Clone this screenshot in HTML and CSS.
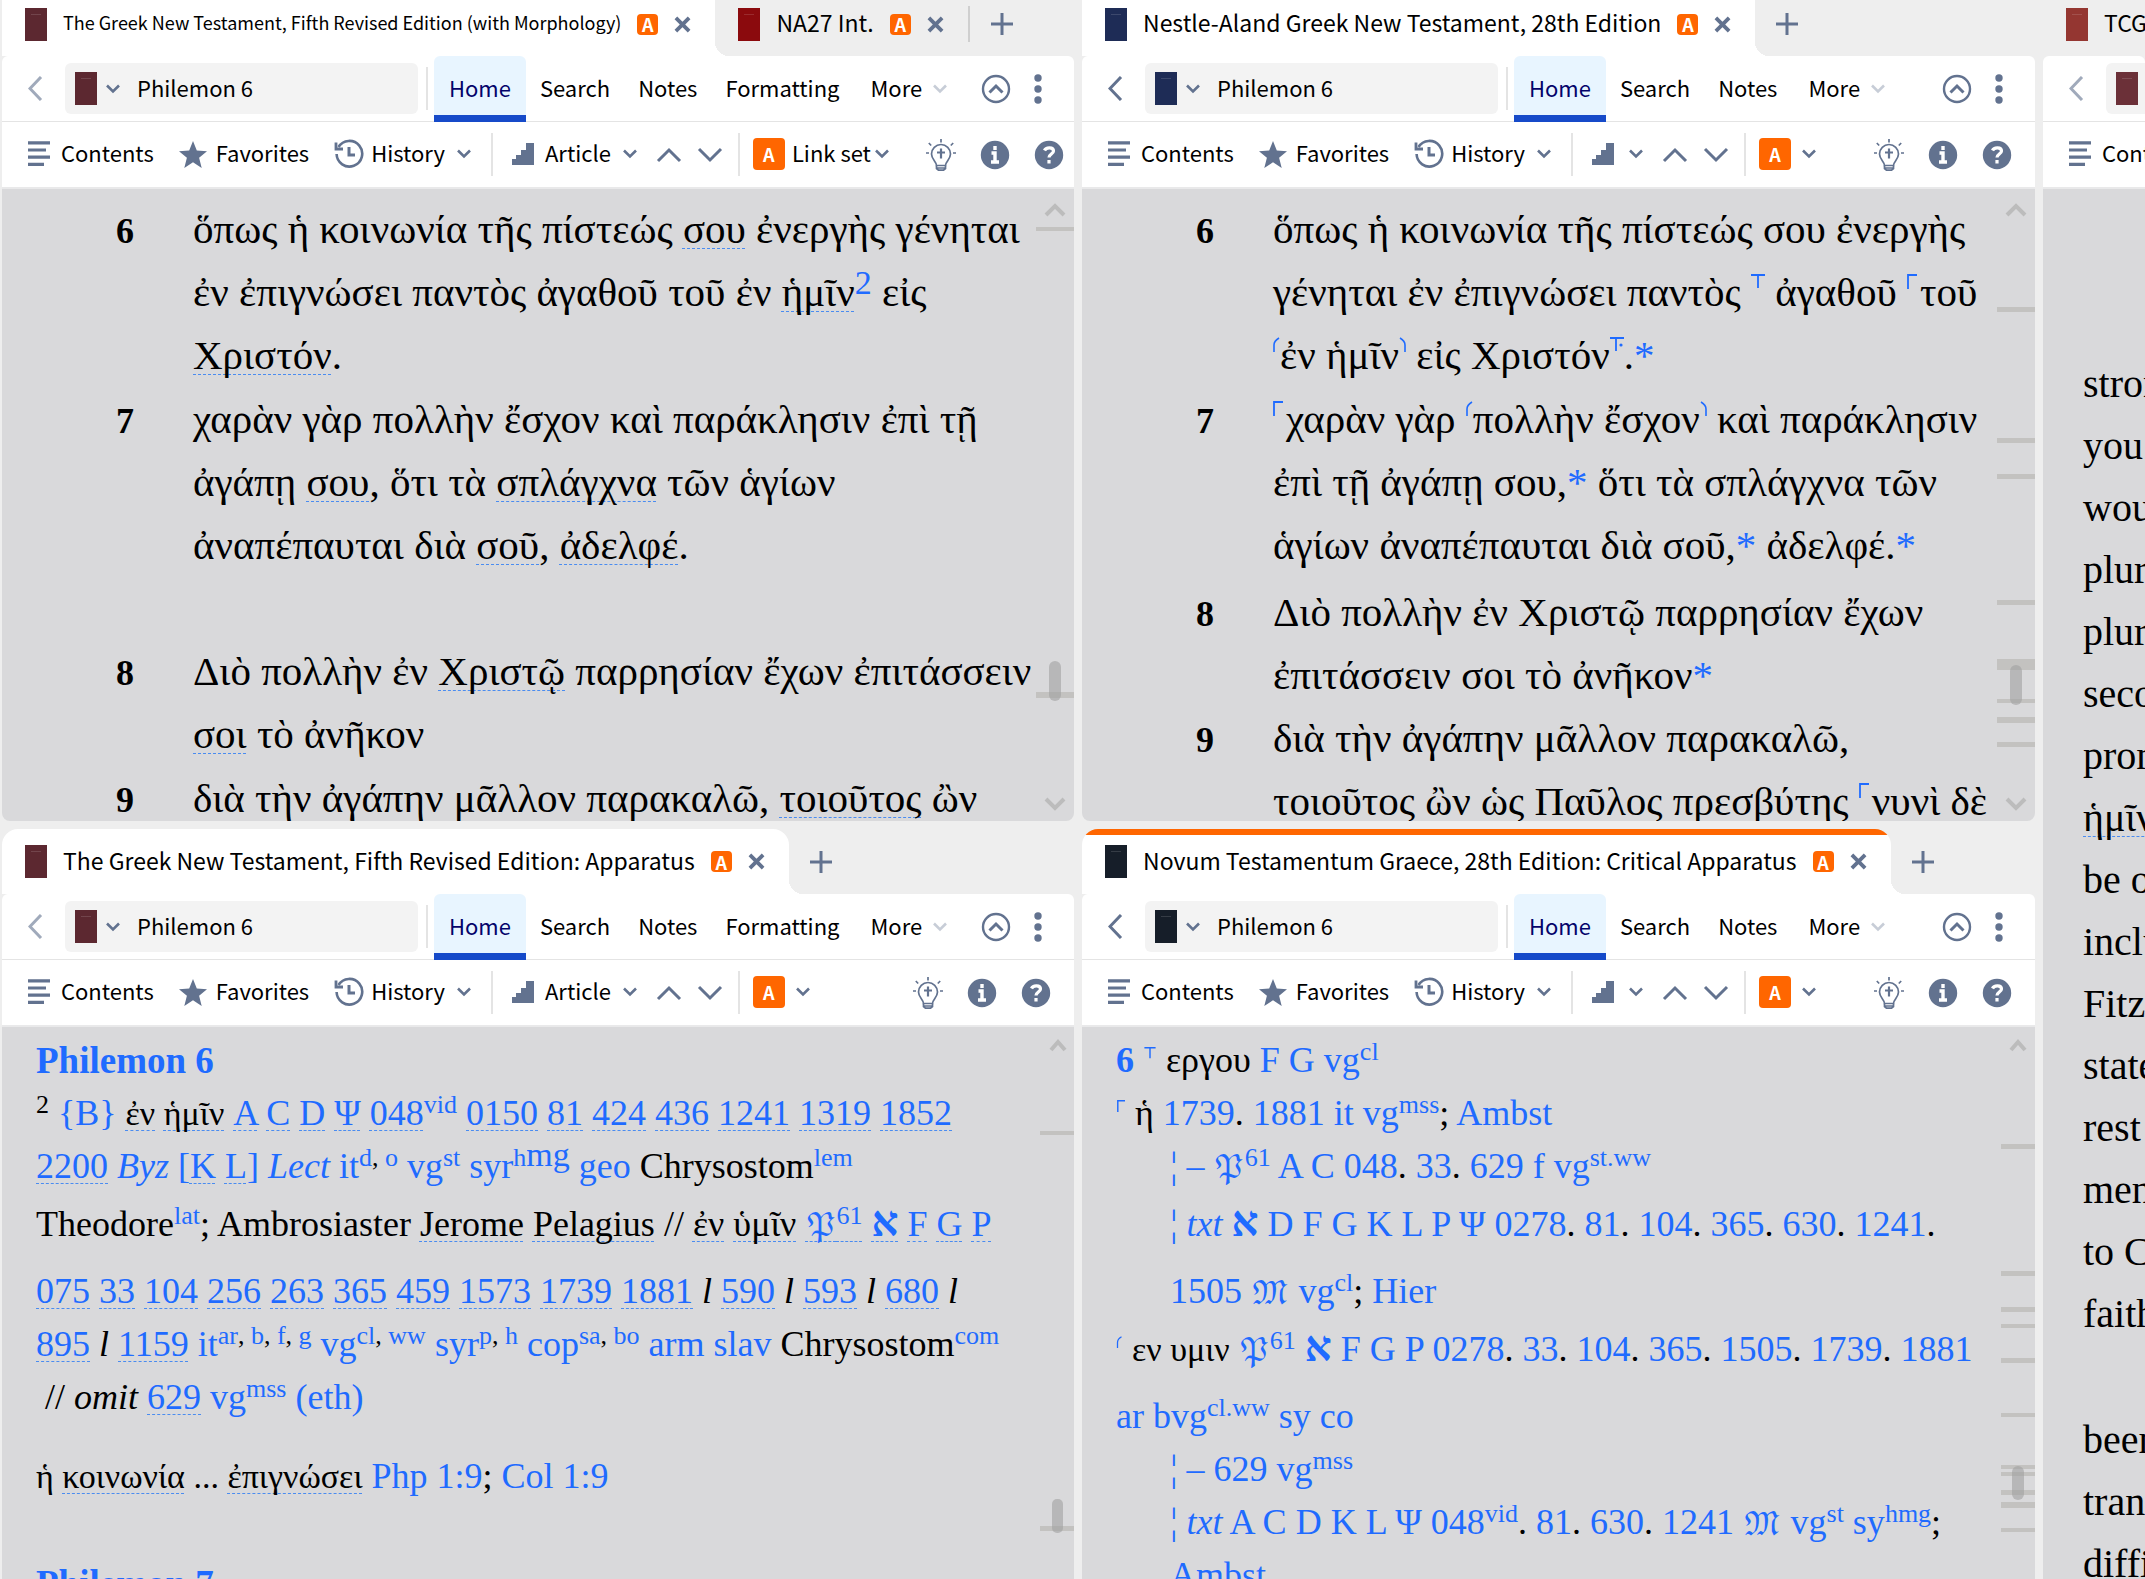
FILE: index.html
```html
<!DOCTYPE html>
<html lang="en">
<head>
  <meta charset="UTF-8" />
  <meta name="viewport" content="width=device-width, initial-scale=1.0"/>
  <title>Philemon 6</title>
  <link rel="stylesheet" href="styles.css">
</head>
<body>
  <!-- Shared icons -->
  <svg class="sprite" aria-hidden="true">
    <symbol id="close" viewBox="0 0 18 18"><path d="M2 2l14 14M16 2L2 16" fill="none" stroke="currentColor" stroke-width="4"/></symbol>
    <symbol id="plus" viewBox="0 0 22 22"><path d="M11 0v22M0 11h22" stroke="currentColor" stroke-width="3"/></symbol>
    <symbol id="back" viewBox="0 0 15 25"><path d="M13 1L2 12.500l11 11.500" fill="none" stroke="currentColor" stroke-width="3"/></symbol>
    <symbol id="down" viewBox="0 0 14 10"><path d="M1 1.500l6 6 6-6" fill="none" stroke="currentColor" stroke-width="2.600"/></symbol>
    <symbol id="next" viewBox="0 0 26 16"><path d="M2 2l11 11L24 2" fill="none" stroke="currentColor" stroke-width="3"/></symbol>
    <symbol id="prev" viewBox="0 0 26 16"><path d="M2 14L13 3l11 11" fill="none" stroke="currentColor" stroke-width="3"/></symbol>
    <symbol id="collapse" viewBox="0 0 30 30"><circle cx="15" cy="15" r="13" fill="none" stroke="currentColor" stroke-width="2.400"/><path d="M8.500 18.500l6.500-6.500 6.500 6.500" fill="none" stroke="currentColor" stroke-width="3"/></symbol>
    <symbol id="dots" viewBox="0 0 8 30"><circle cx="4" cy="4" r="3.700" fill="currentColor"/><circle cx="4" cy="15" r="3.700" fill="currentColor"/><circle cx="4" cy="26" r="3.700" fill="currentColor"/></symbol>
    <symbol id="contents" viewBox="0 0 22 26"><path d="M0 1.800h22M0 9h18M0 16.200h22M0 23.400h16" stroke="currentColor" stroke-width="3.200"/></symbol>
    <symbol id="star" viewBox="0 0 28 27"><path d="M14 0l3.800 9.600L28 10.300l-7.900 6.500L22.700 27 14 21.300 5.300 27l2.600-10.200L0 10.300l10.200-.7z" fill="currentColor"/></symbol>
    <symbol id="history" viewBox="0 0 30 30"><path d="M4.500 8A12.800 12.800 0 1 1 2.600 15" fill="none" stroke="currentColor" stroke-width="2.600"/><path d="M2 3.500V10h7" fill="none" stroke="currentColor" stroke-width="2.800"/><path d="M15 8v8h6" fill="none" stroke="currentColor" stroke-width="3"/></symbol>
    <symbol id="steps" viewBox="0 0 22 22"><path d="M0 22v-6h4v-4h5V7h5V0h8v22z" fill="currentColor"/></symbol>
    <symbol id="bulb" viewBox="0 0 30 32"><g fill="none" stroke="currentColor" stroke-width="1.700"><path d="M10.500 26.500c0-4-5-6-5-11.500a9.500 9.500 0 0 1 19 0c0 5.500-5 7.500-5 11.500z"/><path d="M10.500 26.500v3l2 1.700h5l2-1.700v-3M10.500 29h9M15 0v3.500M0 14h3M27 14h3M2.800 4l2.400 2.500M27.200 4l-2.400 2.500"/><path d="M15 9.500v10M11 13.500h8" stroke-width="2.200"/></g></symbol>
    <symbol id="info" viewBox="0 0 30 30"><circle cx="15" cy="15" r="14.200" fill="currentColor"/><path d="M15 6v4M11.500 13H15v9M11 22h8" fill="none" stroke="#fff" stroke-width="3.400"/></symbol>
    <symbol id="help" viewBox="0 0 30 30"><circle cx="15" cy="15" r="14.200" fill="currentColor"/><path d="M10.500 10.500C12 7 19.500 7 19.500 11c0 3-4.500 3.200-4.500 6.500M15 20v3.500" fill="none" stroke="#fff" stroke-width="3.200"/></symbol>
    <!-- text-critical signs -->
    <symbol id="insert" viewBox="0 0 14 15"><path d="M0 1h14M7 1v13" fill="none" stroke="currentColor" stroke-width="1.800"/></symbol>
    <symbol id="insert2" viewBox="0 0 14 15"><path d="M0 1h14M6 1v13" fill="none" stroke="currentColor" stroke-width="1.800"/><circle cx="11" cy="8" r="1.600" fill="currentColor"/></symbol>
    <symbol id="replace" viewBox="0 0 10 15"><path d="M1 15V1h9" fill="none" stroke="currentColor" stroke-width="1.800"/></symbol>
    <symbol id="open" viewBox="0 0 7 15"><path d="M1 15V8q0-4 5-7" fill="none" stroke="currentColor" stroke-width="1.600"/></symbol>
    <symbol id="shut" viewBox="0 0 7 15"><path d="M6 15V8q0-4-5-7" fill="none" stroke="currentColor" stroke-width="1.600"/></symbol>
  </svg>

  <div class="desk">
    <div class="column column-left">

      <section class="pane upper">
        <div class="tabs">
          <div class="tab active long">
            <span class="book maroon"></span>
            <button class="title">The Greek New Testament, Fifth Revised Edition (with Morphology)</button>
            <span class="badge">A</span>
            <button class="close" aria-label="Close"><svg><use href="#close"/></svg></button>
          </div>
          <div class="tab">
            <span class="book red"></span>
            <button class="title">NA27 Int.</button>
            <span class="badge">A</span>
            <button class="close" aria-label="Close"><svg><use href="#close"/></svg></button>
          </div>
          <span class="tab-line"></span>
          <button class="add" aria-label="New tab"><svg><use href="#plus"/></svg></button>
        </div>
        <nav class="nav">
          <button class="back off" aria-label="Back"><svg><use href="#back"/></svg></button>
          <div class="field">
            <span class="book maroon"></span>
            <button class="drop" aria-label="Choose resource"><svg><use href="#down"/></svg></button>
            <input type="text" aria-label="Reference" value="Philemon 6">
          </div>
          <span class="sep"></span>
          <button class="menu on">Home</button>
          <button class="menu">Search</button>
          <button class="menu">Notes</button>
          <button class="menu">Formatting</button>
          <button class="menu more">More <svg class="ic-down"><use href="#down"/></svg></button>
          <button class="collapse" aria-label="Collapse"><svg><use href="#collapse"/></svg></button>
          <button class="dots" aria-label="Panel menu"><svg><use href="#dots"/></svg></button>
        </nav>
        <div class="tools">
          <button class="tool contents"><svg><use href="#contents"/></svg>Contents</button>
          <button class="tool star"><svg><use href="#star"/></svg>Favorites</button>
          <button class="tool history"><svg><use href="#history"/></svg>History <svg class="ic-down"><use href="#down"/></svg></button>
          <span class="sep"></span>
          <button class="tool steps"><svg><use href="#steps"/></svg>Article <svg class="ic-down"><use href="#down"/></svg></button>
          <button class="step" aria-label="Previous"><svg><use href="#prev"/></svg></button>
          <button class="step" aria-label="Next"><svg><use href="#next"/></svg></button>
          <span class="sep"></span>
          <button class="tool link"><span class="set">A</span>Link set <svg class="ic-down"><use href="#down"/></svg></button>
          <div class="help tight">
            <button aria-label="Tips"><svg class="ic-bulb"><use href="#bulb"/></svg></button>
            <button aria-label="Information"><svg><use href="#info"/></svg></button>
            <button aria-label="Help"><svg><use href="#help"/></svg></button>
          </div>
        </div>
        <div class="view verses" lang="el">
          <div class="verse">
            <b>6</b>
            <p>ὅπως ἡ κοινωνία τῆς πίστεώς <u>σου</u> ἐνεργὴς γένηται<br>ἐν ἐπιγνώσει παντὸς ἀγαθοῦ τοῦ ἐν <u>ἡμῖν</u><a href="#"><sup>2</sup></a> εἰς<br><u>Χριστόν</u>.</p>
          </div>
          <div class="verse">
            <b>7</b>
            <p>χαρὰν γὰρ πολλὴν ἔσχον καὶ παράκλησιν ἐπὶ τῇ<br>ἀγάπῃ <u>σου</u>, ὅτι τὰ <u>σπλάγχνα</u> τῶν ἁγίων<br>ἀναπέπαυται διὰ <u>σοῦ</u>, <u>ἀδελφέ</u>.</p>
          </div>
          <div class="verse section">
            <b>8</b>
            <p>Διὸ πολλὴν ἐν <u>Χριστῷ</u> παρρησίαν ἔχων ἐπιτάσσειν<br><u>σοι</u> τὸ ἀνῆκον</p>
          </div>
          <div class="verse">
            <b>9</b>
            <p>διὰ τὴν ἀγάπην μᾶλλον παρακαλῶ, <u>τοιοῦτος</u> ὢν</p>
          </div>
          <svg class="scroll" width="38" height="633">
            <path class="arrow" d="M10 26l9-9 9 9M10 610l9 9 9-9"/>
            <path class="marks" d="M0 38h38v4H0zM0 503h38v6H0z"/>
            <rect class="thumb" x="13" y="472" width="12" height="40" rx="6"/>
          </svg>
        </div>
      </section>

      <section class="pane lower">
        <div class="tabs">
          <div class="tab active">
            <span class="book maroon"></span>
            <button class="title">The Greek New Testament, Fifth Revised Edition: Apparatus</button>
            <span class="badge">A</span>
            <button class="close" aria-label="Close"><svg><use href="#close"/></svg></button>
          </div>
          <button class="add" aria-label="New tab"><svg><use href="#plus"/></svg></button>
        </div>
        <nav class="nav">
          <button class="back off" aria-label="Back"><svg><use href="#back"/></svg></button>
          <div class="field">
            <span class="book maroon"></span>
            <button class="drop" aria-label="Choose resource"><svg><use href="#down"/></svg></button>
            <input type="text" aria-label="Reference" value="Philemon 6">
          </div>
          <span class="sep"></span>
          <button class="menu on">Home</button>
          <button class="menu">Search</button>
          <button class="menu">Notes</button>
          <button class="menu">Formatting</button>
          <button class="menu more">More <svg class="ic-down"><use href="#down"/></svg></button>
          <button class="collapse" aria-label="Collapse"><svg><use href="#collapse"/></svg></button>
          <button class="dots" aria-label="Panel menu"><svg><use href="#dots"/></svg></button>
        </nav>
        <div class="tools">
          <button class="tool contents"><svg><use href="#contents"/></svg>Contents</button>
          <button class="tool star"><svg><use href="#star"/></svg>Favorites</button>
          <button class="tool history"><svg><use href="#history"/></svg>History <svg class="ic-down"><use href="#down"/></svg></button>
          <span class="sep"></span>
          <button class="tool steps"><svg><use href="#steps"/></svg>Article <svg class="ic-down"><use href="#down"/></svg></button>
          <button class="step" aria-label="Previous"><svg><use href="#prev"/></svg></button>
          <button class="step" aria-label="Next"><svg><use href="#next"/></svg></button>
          <span class="sep"></span>
          <button class="tool link" aria-label="Link set"><span class="set">A</span><svg class="ic-down"><use href="#down"/></svg></button>
          <div class="help">
            <button aria-label="Tips"><svg class="ic-bulb"><use href="#bulb"/></svg></button>
            <button aria-label="Information"><svg><use href="#info"/></svg></button>
            <button aria-label="Help"><svg><use href="#help"/></svg></button>
          </div>
        </div>
        <div class="view apparatus">
          <h2><a href="#">Philemon 6</a></h2>
          <p><sup>2</sup> <a href="#">{B}</a> <i class="gr"><u>ἐν</u> <u>ἡμῖν</u></i> <a href="#"><u>A</u> <u>C</u> <u>D</u> <u>Ψ</u> <u>048</u><sup>vid</sup> <u>0150</u> <u>81</u> <u>424</u> <u>436</u> <u>1241</u> <u>1319</u> <u>1852</u></a></p>
          <p><a href="#"><u>2200</u> <em>Byz</em> [<u>K</u> <u>L</u>] <em>Lect</em> it<sup>d</sup></a><sup>, </sup><a href="#"><sup>o</sup> vg<sup>st</sup> syr<sup>h</sup><sup class="big">mg</sup> geo</a> Chrysostom<a href="#"><sup>lem</sup></a></p>
          <p class="gap-s">Theodore<a href="#"><sup>lat</sup></a>; Ambrosiaster <u>Jerome</u> <u>Pelagius</u> // <u>ἐν</u> <u>ὑμῖν</u> <a href="#"><u><span class="fraktur">𝔓</span><sup>61</sup></u> <u><span class="alef">&#x5D0;</span></u> <u>F</u> <u>G</u> <u>P</u></a></p>
          <p class="gap-m"><a href="#"><u>075</u> <u>33</u> <u>104</u> <u>256</u> <u>263</u> <u>365</u> <u>459</u> <u>1573</u> <u>1739</u> <u>1881</u></a> <em>l</em> <a href="#"><u>590</u></a> <em>l</em> <a href="#"><u>593</u></a> <em>l</em> <a href="#"><u>680</u></a> <em>l</em></p>
          <p><a href="#"><u>895</u></a> <em>l</em> <a href="#"><u>1159</u> it<sup>ar</sup></a><sup>, </sup><a href="#"><sup>b</sup></a><sup>, </sup><a href="#"><sup>f</sup></a><sup>, </sup><a href="#"><sup>g</sup> vg<sup>cl</sup></a><sup>, </sup><a href="#"><sup>ww</sup> syr<sup>p</sup></a><sup>, </sup><a href="#"><sup>h</sup> cop<sup>sa</sup></a><sup>, </sup><a href="#"><sup>bo</sup> arm slav</a> Chrysostom<a href="#"><sup>com</sup></a></p>
          <p>&nbsp;// <em>omit</em> <a href="#"><u>629</u> vg<sup>mss</sup> (eth)</a></p>
          <p class="gap-l"><i class="gr">ἡ <u>κοινωνία</u> ... <u>ἐπιγνώσει</u></i> <a href="#">Php 1:9</a>; <a href="#">Col 1:9</a></p>
          <h2 class="gap-xl"><a href="#">Philemon 7</a></h2>
          <svg class="scroll" width="34" height="553">
            <path class="arrow" d="M11 23l7-8 7 8"/>
            <path class="marks" d="M0 104h34v4H0zM0 499h34v5H0z"/>
            <rect class="thumb" x="12" y="472" width="11" height="34" rx="5"/>
          </svg>
        </div>
      </section>
    </div>

    <div class="column column-mid">
      <section class="pane upper">
        <div class="tabs">
          <div class="tab active">
            <span class="book navy"></span>
            <button class="title">Nestle-Aland Greek New Testament, 28th Edition</button>
            <span class="badge">A</span>
            <button class="close" aria-label="Close"><svg><use href="#close"/></svg></button>
          </div>
          <button class="add" aria-label="New tab"><svg><use href="#plus"/></svg></button>
        </div>
        <nav class="nav">
          <button class="back" aria-label="Back"><svg><use href="#back"/></svg></button>
          <div class="field">
            <span class="book navy"></span>
            <button class="drop" aria-label="Choose resource"><svg><use href="#down"/></svg></button>
            <input type="text" aria-label="Reference" value="Philemon 6">
          </div>
          <span class="sep"></span>
          <button class="menu on">Home</button>
          <button class="menu">Search</button>
          <button class="menu">Notes</button>
          <button class="menu more">More <svg class="ic-down"><use href="#down"/></svg></button>
          <button class="collapse" aria-label="Collapse"><svg><use href="#collapse"/></svg></button>
          <button class="dots" aria-label="Panel menu"><svg><use href="#dots"/></svg></button>
        </nav>
        <div class="tools">
          <button class="tool contents"><svg><use href="#contents"/></svg>Contents</button>
          <button class="tool star"><svg><use href="#star"/></svg>Favorites</button>
          <button class="tool history"><svg><use href="#history"/></svg>History <svg class="ic-down"><use href="#down"/></svg></button>
          <span class="sep"></span>
          <button class="tool steps bare" aria-label="Article"><svg><use href="#steps"/></svg><svg class="ic-down"><use href="#down"/></svg></button>
          <button class="step" aria-label="Previous"><svg><use href="#prev"/></svg></button>
          <button class="step" aria-label="Next"><svg><use href="#next"/></svg></button>
          <span class="sep"></span>
          <button class="tool link" aria-label="Link set"><span class="set">A</span><svg class="ic-down"><use href="#down"/></svg></button>
          <div class="help">
            <button aria-label="Tips"><svg class="ic-bulb"><use href="#bulb"/></svg></button>
            <button aria-label="Information"><svg><use href="#info"/></svg></button>
            <button aria-label="Help"><svg><use href="#help"/></svg></button>
          </div>
        </div>
        <div class="view verses" lang="el">
          <div class="verse">
            <b>6</b>
            <p>ὅπως ἡ κοινωνία τῆς πίστεώς σου ἐνεργὴς<br>γένηται ἐν ἐπιγνώσει παντὸς <svg class="sign"><use href="#insert"/></svg> ἀγαθοῦ <svg class="sign sign-r"><use href="#replace"/></svg>τοῦ<br><svg class="sign sign-b"><use href="#open"/></svg>ἐν ἡμῖν<svg class="sign sign-b"><use href="#shut"/></svg> εἰς Χριστόν<svg class="sign"><use href="#insert2"/></svg>.<a href="#">*</a></p>
          </div>
          <div class="verse">
            <b>7</b>
            <p><svg class="sign sign-r"><use href="#replace"/></svg>χαρὰν γὰρ <svg class="sign sign-b"><use href="#open"/></svg>πολλὴν ἔσχον<svg class="sign sign-b"><use href="#shut"/></svg> καὶ παράκλησιν<br>ἐπὶ τῇ ἀγάπῃ σου,<a href="#">*</a> ὅτι τὰ σπλάγχνα τῶν<br>ἁγίων ἀναπέπαυται διὰ σοῦ,<a href="#">*</a> ἀδελφέ.<a href="#">*</a></p>
          </div>
          <div class="verse loose">
            <b>8</b>
            <p>Διὸ πολλὴν ἐν Χριστῷ παρρησίαν ἔχων<br>ἐπιτάσσειν σοι τὸ ἀνῆκον<a href="#">*</a></p>
          </div>
          <div class="verse flush">
            <b>9</b>
            <p>διὰ τὴν ἀγάπην μᾶλλον παρακαλῶ,<br>τοιοῦτος ὢν ὡς Παῦλος πρεσβύτης <svg class="sign sign-r"><use href="#replace"/></svg>νυνὶ δὲ</p>
          </div>
          <svg class="scroll" width="38" height="633">
            <path class="arrow" d="M10 26l9-9 9 9M10 610l9 9 9-9"/>
            <path class="marks" d="M0 118h38v5H0zM0 249h38v5H0zM0 285h38v5H0zM0 411h38v5H0zM0 470h38v11H0zM0 510h38v4H0zM0 528h38v6H0zM0 553h38v5H0z"/>
            <rect class="thumb" x="13" y="476" width="12" height="40" rx="6"/>
          </svg>
        </div>
      </section>

      <section class="pane lower">
        <div class="tabs">
          <div class="tab active focus">
            <span class="book black"></span>
            <button class="title">Novum Testamentum Graece, 28th Edition: Critical Apparatus</button>
            <span class="badge">A</span>
            <button class="close" aria-label="Close"><svg><use href="#close"/></svg></button>
          </div>
          <button class="add" aria-label="New tab"><svg><use href="#plus"/></svg></button>
        </div>
        <nav class="nav">
          <button class="back" aria-label="Back"><svg><use href="#back"/></svg></button>
          <div class="field">
            <span class="book black"></span>
            <button class="drop" aria-label="Choose resource"><svg><use href="#down"/></svg></button>
            <input type="text" aria-label="Reference" value="Philemon 6">
          </div>
          <span class="sep"></span>
          <button class="menu on">Home</button>
          <button class="menu">Search</button>
          <button class="menu">Notes</button>
          <button class="menu more">More <svg class="ic-down"><use href="#down"/></svg></button>
          <button class="collapse" aria-label="Collapse"><svg><use href="#collapse"/></svg></button>
          <button class="dots" aria-label="Panel menu"><svg><use href="#dots"/></svg></button>
        </nav>
        <div class="tools">
          <button class="tool contents"><svg><use href="#contents"/></svg>Contents</button>
          <button class="tool star"><svg><use href="#star"/></svg>Favorites</button>
          <button class="tool history"><svg><use href="#history"/></svg>History <svg class="ic-down"><use href="#down"/></svg></button>
          <span class="sep"></span>
          <button class="tool steps bare" aria-label="Article"><svg><use href="#steps"/></svg><svg class="ic-down"><use href="#down"/></svg></button>
          <button class="step" aria-label="Previous"><svg><use href="#prev"/></svg></button>
          <button class="step" aria-label="Next"><svg><use href="#next"/></svg></button>
          <span class="sep"></span>
          <button class="tool link" aria-label="Link set"><span class="set">A</span><svg class="ic-down"><use href="#down"/></svg></button>
          <div class="help">
            <button aria-label="Tips"><svg class="ic-bulb"><use href="#bulb"/></svg></button>
            <button aria-label="Information"><svg><use href="#info"/></svg></button>
            <button aria-label="Help"><svg><use href="#help"/></svg></button>
          </div>
        </div>
        <div class="view apparatus critical">
          <p><a href="#"><b>6</b></a> <svg class="sign"><use href="#insert"/></svg> εργου <a href="#">F G vg<sup>cl</sup></a></p>
          <p><svg class="sign sign-r"><use href="#replace"/></svg> ἡ <a href="#">1739</a>. <a href="#">1881 it vg<sup>mss</sup></a>; <a href="#">Ambst</a></p>
          <p class="in"><a href="#"><span class="bar">¦</span> – <span class="fraktur">𝔓</span><sup>61</sup> A C 048</a>. <a href="#">33</a>. <a href="#">629 f vg<sup>st.ww</sup></a></p>
          <p class="in gap-s"><a href="#"><span class="bar">¦</span> <em>txt</em> <span class="alef">&#x5D0;</span> D F G K L P Ψ 0278</a>. <a href="#">81</a>. <a href="#">104</a>. <a href="#">365</a>. <a href="#">630</a>. <a href="#">1241</a>.</p>
          <p class="in gap-m"><a href="#">1505 <span class="fraktur">𝔐</span> vg<sup>cl</sup></a>; <a href="#">Hier</a></p>
          <p class="gap-s"><svg class="sign sign-b"><use href="#open"/></svg> <i class="gr">εν υμιν</i> <a href="#"><span class="fraktur">𝔓</span><sup>61</sup> <span class="alef">&#x5D0;</span> F G P 0278</a>. <a href="#">33</a>. <a href="#">104</a>. <a href="#">365</a>. <a href="#">1505</a>. <a href="#">1739</a>. <a href="#">1881</a></p>
          <p class="gap-m"><a href="#">ar bvg<sup>cl.ww</sup> sy co</a></p>
          <p class="in"><a href="#"><span class="bar">¦</span> – 629 vg<sup>mss</sup></a></p>
          <p class="in"><a href="#"><span class="bar">¦</span> <em>txt</em> A C D K L Ψ 048<sup>vid</sup></a>. <a href="#">81</a>. <a href="#">630</a>. <a href="#">1241 <span class="fraktur">𝔐</span> vg<sup>st</sup> sy<sup>hmg</sup></a>;</p>
          <p class="in"><a href="#">Ambst</a></p>
          <svg class="scroll" width="34" height="553">
            <path class="arrow" d="M10 23l7-8 7 8"/>
            <path class="marks" d="M0 117h34v5H0zM0 244h34v5H0zM0 280h34v5H0zM0 297h34v4H0zM0 331h34v5H0zM0 386h34v4H0zM0 438h34v4H0zM0 445h34v4H0zM0 463h34v5H0zM0 475h34v6H0zM0 501h34v4H0z"/>
            <rect class="thumb" x="11" y="439" width="12" height="34" rx="6"/>
          </svg>
        </div>
      </section>
    </div>

    <div class="column column-right">
      <section class="pane upper">
        <div class="tabs">
          <div class="tab">
            <span class="book brick"></span>
            <button class="title">TCGNT</button>
          </div>
        </div>
        <nav class="nav">
          <button class="back off" aria-label="Back"><svg><use href="#back"/></svg></button>
          <div class="field"><span class="book wine"></span></div>
        </nav>
        <div class="tools">
          <button class="tool contents"><svg><use href="#contents"/></svg>Contents</button>
        </div>
        <div class="view prose">
          <p>stron<br>you<br>would<br>plural<br>plural<br>secon<br>pron<br><u>ἡμῖν</u><br>be on<br>includ<br>Fitzm<br>state<br>rest<br>ment<br>to Ch<br>faith</p>
          <p>been<br>trans<br>diffic</p>
        </div>
      </section>
    </div>
  </div>
</body>
</html>
```
FILE: styles.css
```css
:root {
  --frame: #eeeeee;
  --page: #d9d9db;
  --icon: #62728f;
  --orange: #ff6600;
  --link: #1f6bff;
  --line: #e4e4e4;
}

* {
  box-sizing: border-box;
}

body {
  margin: 0;
  background: var(--frame);
  color: #000;
  font-family: "Noto Sans CJK SC", "Noto Sans", sans-serif;
  font-size: 22px;
  line-height: 32px;
  overflow: hidden;
}

.sprite {
  position: absolute;
  width: 0;
  height: 0;
}

button {
  display: flex;
  flex: none;
  align-items: center;
  padding: 0;
  border: 0;
  background: none;
  color: inherit;
  font: inherit;
  white-space: nowrap;
  cursor: pointer;
}

svg {
  display: block;
  flex: none;
  color: var(--icon);
}

a {
  color: var(--link);
  text-decoration: none;
}

/* Columns and panes */
.desk {
  display: grid;
  grid-template-columns: minmax(0, 1072fr) minmax(0, 953fr) minmax(0, 102fr);
  gap: 8px;
  height: 100vh;
  padding-left: 2px;
}

.column {
  display: flex;
  flex-direction: column;
  gap: 8px;
  min-width: 0;
  min-height: 0;
}

.pane {
  display: flex;
  flex-direction: column;
  min-height: 0;
  overflow: hidden;
}

.upper {
  flex: 821 821 0;
}

.lower {
  flex: 750 750 0;
}

/* Tabs */
.tabs {
  display: flex;
  flex: none;
  align-items: center;
  height: 56px;
}

.lower .tabs {
  height: 65px;
}

.tab {
  position: relative;
  display: flex;
  align-items: center;
  height: 100%;
  padding: 0 24px 0 23px;
}

.upper .tabs {
  padding-bottom: 8px;
}

.upper .tab.active {
  height: 56px;
  margin-bottom: -8px;
  padding-bottom: 8px;
}

.tab.active {
  background: #fff;
}

.lower .tab.active {
  border-radius: 16px 16px 0 0;
}

.lower .tab.focus {
  background: linear-gradient(var(--orange) 6px, #fff 6px);
}

.tab.active::after {
  content: "";
  position: absolute;
  right: -14px;
  bottom: 0;
  width: 14px;
  height: 14px;
  background: radial-gradient(circle at 100% 0, transparent 14px, #fff 14px);
}

.title {
  margin-left: 16px;
  padding-bottom: 4px;
  font-size: 23px;
}

.long .title {
  font-size: 18px;
}

.book {
  flex: none;
  width: 22px;
  height: 33px;
  background: linear-gradient(transparent 6px, #ffffff22 6px 7px, transparent 7px) center / 10px 100% no-repeat, var(--cover);
}

.maroon { --cover: #5c2830; }
.red { --cover: #8b0a0d; }
.navy { --cover: #1e2c56; }
.black { --cover: #161e29; }
.brick { --cover: #943631; }
.wine { --cover: #6b3038; }

.badge,
.set {
  display: flex;
  flex: none;
  align-items: center;
  justify-content: center;
  border-radius: 4px;
  background: var(--orange);
  color: #fff;
  font-size: 18px;
  font-weight: bold;
}

.badge {
  width: 21px;
  height: 21px;
  margin-left: 16px;
}

.close {
  margin-left: 16px;
}

.close svg {
  width: 17px;
  height: 17px;
}

.tab-line {
  width: 2px;
  height: 36px;
  background: #cfcfcf;
}

.add {
  margin-left: 21px;
}

.add svg {
  width: 22px;
  height: 22px;
}

/* Navigation row */
.nav {
  display: flex;
  flex: none;
  align-items: center;
  height: 66px;
  padding: 0 32px 0 26px;
  border-bottom: 1px solid var(--line);
  border-radius: 6px 6px 0 0;
  background: #fff;
}

.back svg {
  width: 15px;
  height: 25px;
}

.off svg {
  opacity: 0.6;
}

.field {
  display: flex;
  flex: none;
  align-items: center;
  width: 353px;
  height: 51px;
  margin-left: 22px;
  padding-left: 10px;
  border-radius: 6px;
  background: #f3f3f3;
}

.drop {
  margin-left: 9px;
}

.drop svg,
.ic-down {
  width: 14px;
  height: 10px;
}

.field input {
  min-width: 0;
  flex: 1;
  margin-left: 17px;
  padding: 0 0 3px;
  border: 0;
  background: none;
  color: inherit;
  font: inherit;
}

.sep {
  flex: none;
  width: 2px;
  height: 43px;
  background: var(--line);
}

.nav .sep {
  margin: 0 6px 0 8px;
}

.menu {
  height: 66px;
  padding: 0 14px 4px;
}

.menu.on {
  border-bottom: 7px solid #164ac9;
  border-radius: 6px 6px 0 0;
  padding: 7px 15px 4px;
  background: #e8f5ff;
  color: #04046b;
}

.more {
  margin-left: 3px;
}

.more .ic-down {
  margin: 4px 0 0 11px;
  opacity: 0.35;
}

.collapse {
  margin-left: auto;
}

.collapse svg {
  width: 30px;
  height: 30px;
}

.dots {
  margin-left: 23px;
}

.dots svg {
  width: 8px;
  height: 30px;
}

/* Tool row */
.tools {
  display: flex;
  flex: none;
  align-items: center;
  height: 67px;
  padding-left: 26px;
  border-bottom: 2px solid #e9e9ea;
  background: #fff;
}

.tool {
  padding-bottom: 6px;
}

.tool svg,
.tool .set {
  margin-top: 5px;
}

.tool .ic-down {
  margin-left: 12px;
}

.tool.contents svg {
  width: 22px;
  height: 26px;
  margin-right: 11px;
}

.star {
  margin-left: 25px;
}

.star > svg {
  width: 28px;
  height: 27px;
  margin-right: 9px;
}

.history {
  margin: 0 20px 0 25px;
}

.history > svg:first-child {
  width: 30px;
  height: 30px;
  margin-right: 7px;
}

.steps {
  margin: 0 19px;
}

.steps > svg:first-child {
  width: 22px;
  height: 22px;
  margin-right: 11px;
}

.step {
  margin-right: 15px;
}

.step svg {
  width: 26px;
  height: 16px;
}

.link {
  margin-left: 13px;
}

.set {
  width: 32px;
  height: 32px;
  margin-right: 7px;
}

.tool .set + .ic-down,
.bare .ic-down {
  margin-left: 4px;
}

.help {
  display: flex;
  gap: 24px;
  margin-left: auto;
  padding-right: 23px;
}

.help.tight {
  padding-right: 10px;
}

.help svg {
  width: 30px;
  height: 30px;
}

.help .ic-bulb {
  height: 32px;
}

/* Reading area */
.view {
  position: relative;
  flex: 1;
  min-height: 0;
  overflow: hidden;
  background: var(--page);
  font-family: "Liberation Serif", serif;
  font-size: 36px;
  white-space: nowrap;
}

.view p {
  margin: 0;
}

.view h2 {
  margin: 0;
  font-size: 37px;
}

.upper .verses {
  border-radius: 0 0 8px 8px;
}

.view u {
  text-decoration: underline dashed 1px #4a8cf0;
  text-underline-offset: 5px;
  text-decoration-skip-ink: none;
}

.view sup {
  font-size: 26px;
  line-height: 0;
  vertical-align: 12px;
}

.view sup.big {
  font-size: 34px;
}

.verses {
  padding: 8px 40px 0 114px;
  font-size: 41px;
  line-height: 63px;
}

.verses a sup {
  font-size: 34px;
}

.verse {
  display: flex;
  align-items: baseline;
  margin-top: 1px;
}

.verse.flush {
  margin-top: 0;
}

.verse.section {
  margin-top: 63px;
}

.verse.loose {
  margin-top: 4px;
}

.verse b {
  flex: none;
  width: 77px;
  font-size: 36px;
}

.sign {
  display: inline-block;
  width: 14px;
  height: 15px;
  color: var(--link);
  vertical-align: 17px;
}

.sign-r {
  width: 10px;
  margin-right: 3px;
}

.sign-b {
  width: 7px;
}

.apparatus {
  padding: 7px 34px 0;
  line-height: 53px;
}

.apparatus .gr {
  font-size: 34px;
  font-style: normal;
  line-height: 0;
}

.apparatus .gap-s { margin-top: 5px; }
.apparatus .gap-m { margin-top: 14px; }
.apparatus .gap-l { margin-top: 26px; }
.apparatus .gap-xl { margin-top: 54px; }
.apparatus .in { padding-left: 54px; }

.apparatus .sign {
  height: 12px;
  vertical-align: 13px;
}

.apparatus .sign-r {
  margin-right: 0;
}

.fraktur,
.alef,
.bar {
  line-height: 0;
}

.fraktur {
  font-family: "DejaVu Math TeX Gyre", "DejaVu Sans", serif;
  font-size: 29px;
}

.alef {
  font-size: 42px;
  font-weight: bold;
  unicode-bidi: isolate;
}

.bar {
  font-size: 38px;
}

.prose {
  padding: 164px 0 0 40px;
  font-size: 40px;
  line-height: 62px;
}

.prose p + p {
  margin-top: 64px;
}

/* Scroll gutter, drawn over the text */
.scroll {
  position: absolute;
  top: 0;
  right: 0;
}

.arrow {
  fill: none;
  stroke: #bcbcbc;
  stroke-width: 4;
}

.marks {
  fill: #c3c2c0;
}

.thumb {
  fill: #a0a0a0;
  fill-opacity: 0.6;
}
```
